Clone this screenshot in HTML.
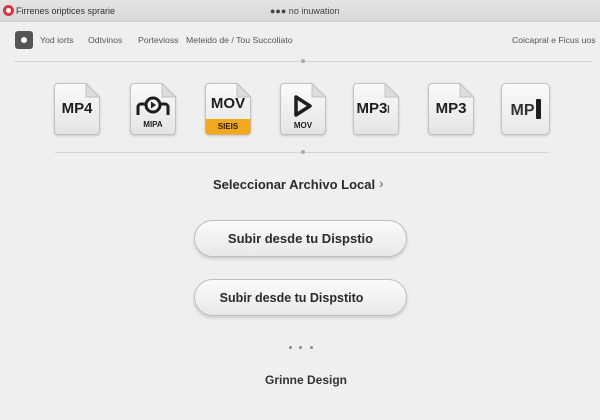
<!DOCTYPE html><html><head><style>
*{margin:0;padding:0;box-sizing:border-box}
body{width:600px;height:420px;background:#efefef;font-family:"Liberation Sans",sans-serif;position:relative;overflow:hidden;color:#222}
.a{position:absolute}
.top{left:0;top:0;width:600px;height:22px;background:linear-gradient(#e4e4e4,#d8d8d8);border-bottom:1px solid #cfcfcf}
.t{font-size:9px;color:#333;white-space:nowrap}
.n{font-size:8.7px;color:#555;white-space:nowrap}
.line{height:1px;background:#d4d4d4}
.dot{width:4px;height:4px;border-radius:2px;background:#aaa}
.f{width:46px;height:52px;filter:drop-shadow(0 1px 1px rgba(0,0,0,.18))}
.f svg.bg{position:absolute;left:0;top:0}
.lb{position:absolute;left:0;right:0;text-align:center;font-weight:bold;color:#1e1e1e}
.btn{left:194px;width:213px;height:37px;border-radius:19px;background:linear-gradient(#fbfbfb,#e8e8e8);border:1px solid #bdbdbd;box-shadow:0 2px 3px rgba(0,0,0,.15);font-size:13px;font-weight:bold;color:#2a2a2a;display:flex;align-items:center;justify-content:center}
</style></head><body>
<svg width="0" height="0" style="position:absolute"><defs><linearGradient id="g" x1="0" y1="0" x2="0" y2="1"><stop offset="0" stop-color="#fafafa"/><stop offset="1" stop-color="#e4e4e4"/></linearGradient></defs></svg>
<div class="a top"></div>
<div class="a" style="left:3px;top:5px;width:11px;height:11px;border-radius:50%;background:#d9363e"></div>
<div class="a" style="left:6px;top:8px;width:5px;height:5px;border-radius:50%;background:#fff"></div>
<div class="a t" style="left:16px;top:6px">Firrenes oriptices sprarie</div>
<div class="a t" style="left:270px;top:6px;color:#444">●●● no inuwation</div>
<div class="a" style="left:15px;top:31px;width:18px;height:18px;border-radius:3px;background:#555"></div>
<div class="a" style="left:21px;top:37px;width:6px;height:6px;border-radius:50%;background:#fff"></div>
<div class="a n" style="left:40px;top:35px">Yod iorts</div>
<div class="a n" style="left:88px;top:35px">Odtvinos</div>
<div class="a n" style="left:138px;top:35px">Portevioss</div>
<div class="a n" style="left:186px;top:35px">Meteido de / Tou Succoliato</div>
<div class="a n" style="left:512px;top:35px">Coicapral e Ficus uos</div>
<div class="a line" style="left:14px;top:61px;width:578px"></div>
<div class="a dot" style="left:301px;top:59px"></div>

<div class="a f" style="left:54px;top:83px"><svg class="bg" width="46" height="52"><path d="M4 .5H32L45.5 14V48a3.5 3.5 0 0 1-3.5 3.5H4A3.5 3.5 0 0 1 .5 48V4A3.5 3.5 0 0 1 4 .5z" fill="url(#g)" stroke="#c2c2c2"/><path d="M32 .5V14H45.5z" fill="#dcdcdc" stroke="#c2c2c2"/></svg><div class="lb" style="top:17px;font-size:15px">MP4</div></div>
<div class="a f" style="left:130px;top:83px"><svg class="bg" width="46" height="52"><path d="M4 .5H32L45.5 14V48a3.5 3.5 0 0 1-3.5 3.5H4A3.5 3.5 0 0 1 .5 48V4A3.5 3.5 0 0 1 4 .5z" fill="url(#g)" stroke="#c2c2c2"/><path d="M32 .5V14H45.5z" fill="#dcdcdc" stroke="#c2c2c2"/></svg><svg class="a" style="left:5px;top:12px" width="36" height="22" viewBox="0 0 36 22"><path d="M3 20V12a3 3 0 0 1 3-3h6M24 9h6a3 3 0 0 1 3 3v8" stroke="#1e1e1e" stroke-width="3" fill="none"/><circle cx="18" cy="10" r="7" stroke="#1e1e1e" stroke-width="3" fill="none"/><path d="M16 6.5l5 3.5-5 3.5z" fill="#1e1e1e"/></svg><div class="lb" style="top:37px;font-size:8px">MIPA</div></div>
<div class="a f" style="left:205px;top:83px"><svg class="bg" width="46" height="52"><path d="M4 .5H32L45.5 14V48a3.5 3.5 0 0 1-3.5 3.5H4A3.5 3.5 0 0 1 .5 48V4A3.5 3.5 0 0 1 4 .5z" fill="url(#g)" stroke="#c2c2c2"/><path d="M.5 36H45.5V48a3.5 3.5 0 0 1-3.5 3.5H4A3.5 3.5 0 0 1 .5 48z" fill="#f2a81d"/><path d="M32 .5V14H45.5z" fill="#dcdcdc" stroke="#c2c2c2"/></svg><div class="lb" style="top:12px;font-size:15px">MOV</div><div class="lb" style="top:39px;font-size:8px">SIEIS</div></div>
<div class="a f" style="left:280px;top:83px"><svg class="bg" width="46" height="52"><path d="M4 .5H32L45.5 14V48a3.5 3.5 0 0 1-3.5 3.5H4A3.5 3.5 0 0 1 .5 48V4A3.5 3.5 0 0 1 4 .5z" fill="url(#g)" stroke="#c2c2c2"/><path d="M32 .5V14H45.5z" fill="#dcdcdc" stroke="#c2c2c2"/></svg><svg class="a" style="left:14px;top:12px" width="18" height="22" viewBox="0 0 18 22"><path d="M2 2l14 9-14 9z" fill="none" stroke="#1e1e1e" stroke-width="3.5" stroke-linejoin="round"/></svg><div class="lb" style="top:38px;font-size:8px">MOV</div></div>
<div class="a f" style="left:353px;top:83px"><svg class="bg" width="46" height="52"><path d="M4 .5H32L45.5 14V48a3.5 3.5 0 0 1-3.5 3.5H4A3.5 3.5 0 0 1 .5 48V4A3.5 3.5 0 0 1 4 .5z" fill="url(#g)" stroke="#c2c2c2"/><path d="M32 .5V14H45.5z" fill="#dcdcdc" stroke="#c2c2c2"/></svg><div class="lb" style="top:17px;font-size:15px;padding-right:6px">MP3<span style="font-size:10px">⦚</span></div></div>
<div class="a f" style="left:428px;top:83px"><svg class="bg" width="46" height="52"><path d="M4 .5H32L45.5 14V48a3.5 3.5 0 0 1-3.5 3.5H4A3.5 3.5 0 0 1 .5 48V4A3.5 3.5 0 0 1 4 .5z" fill="url(#g)" stroke="#c2c2c2"/><path d="M32 .5V14H45.5z" fill="#dcdcdc" stroke="#c2c2c2"/></svg><div class="lb" style="top:17px;font-size:15px">MP3</div></div>
<div class="a f" style="left:501px;top:83px;width:49px;background:linear-gradient(#fafafa,#e8e8e8);border:1px solid #c4c4c4;border-radius:5px"><div class="lb" style="top:15px;font-size:16px;color:#333">MP<span style="display:inline-block;width:5px;height:20px;background:#1e1e1e;vertical-align:-4px;margin-left:1px;border-radius:1px"></span></div></div>

<div class="a line" style="left:55px;top:152px;width:494px"></div>
<div class="a dot" style="left:301px;top:150px"></div>

<div class="a" style="left:213px;top:177px;font-size:13px;font-weight:bold;color:#2a2a2a">Seleccionar Archivo Local</div>
<div class="a" style="left:379px;top:175px;font-size:14px;color:#666">›</div>

<div class="a btn" style="top:220px">Subir desde tu Dispstio</div>
<div class="a btn" style="top:279px;font-size:12.5px;padding-right:18px">Subir desde tu Dispstito</div>

<div class="a" style="left:289px;top:346px;width:3px;height:3px;border-radius:50%;background:#888"></div>
<div class="a" style="left:299px;top:346px;width:3px;height:3px;border-radius:50%;background:#888"></div>
<div class="a" style="left:310px;top:346px;width:3px;height:3px;border-radius:50%;background:#888"></div>
<div class="a" style="left:265px;top:373px;font-size:12px;font-weight:bold;color:#333">Grinne Design</div>
</body></html>
